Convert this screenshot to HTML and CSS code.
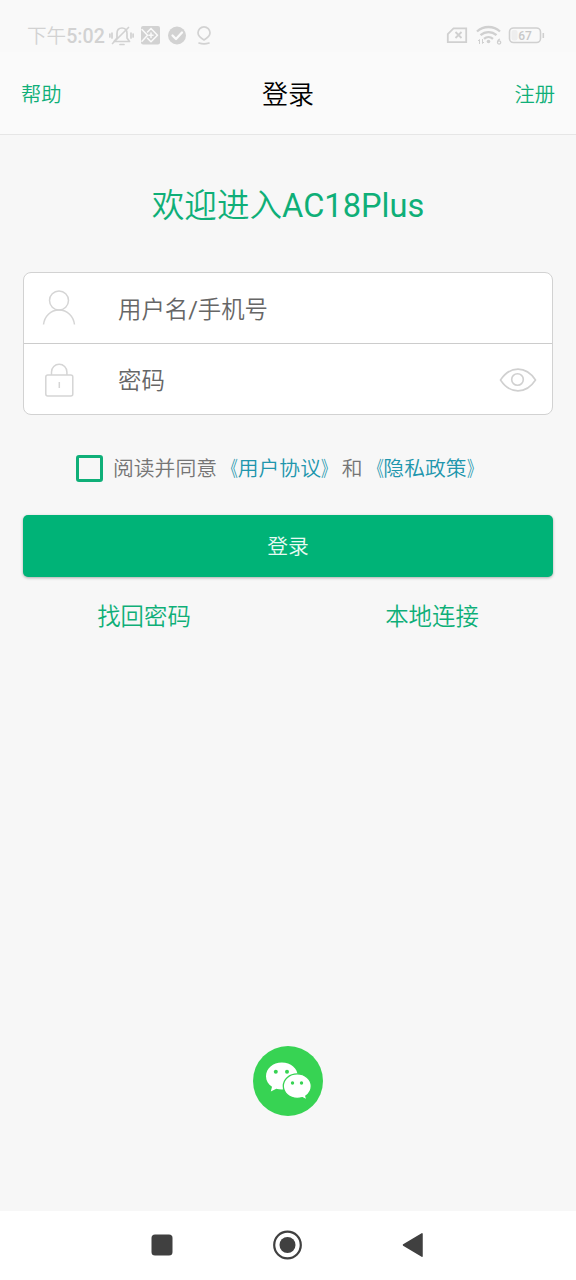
FILE: index.html
```html
<!DOCTYPE html>
<html lang="zh-CN">
<head>
<meta charset="utf-8">
<title>登录</title>
<link rel="stylesheet" href="styles.css">
</head>
<body>
<div class="screen">
  <div class="status">
    <span class="clock">下午<b>5:02</b></span>
    <svg class="status-left" width="106" height="24" viewBox="0 0 106 24" fill="none" stroke="#d2d2d2" stroke-width="1.7" stroke-linecap="round" stroke-linejoin="round">
      <path d="M5 17.500h15.500l-2.500-3.500v-4.500c0-3.500-2-5.500-5-5.500s-5 2-5 5.500v4.500zM11 20.500h4M3.500 19.500l16-16M3 9v5M.9 10v3M22 9v5M24.100 10v3"/>
      <rect x="32" y="2" width="19" height="18.500" rx="2" fill="#d2d2d2" stroke="none"/>
      <path d="M33 5.500l5.500 5.700-5.500 6M42 4.500l6.500 6.700-6.500 6.500-3.500-3.500M42 4.500l-3.500 3.500M42 9v4.500M40 11.200h4" stroke="#fafafa" stroke-width="1.500"/>
      <circle cx="68" cy="11.500" r="9" fill="#d2d2d2" stroke="none"/>
      <path d="M63.500 11.500l3.500 3.500 6-6.500" stroke="#fafafa" stroke-width="2.300"/>
      <path d="M95 16c-3.500-2-6-4-6-7.200a6 6 0 0 1 12 0c0 3.200-2.500 5.200-6 7.200zM90 19c3 1 7 1 10 0"/>
    </svg>
    <svg class="status-right" width="102" height="24" viewBox="0 0 102 24" fill="none" stroke="#d0d0d0" stroke-width="1.800">
      <path d="M2.800 18.200V10l5.700-5.700h12.700v13.900zM10.500 8l6 6m0-6l-6 6"/>
      <path d="M32 7.500c6.500-6 16.500-6 23 0M35.500 11.200c4.700-4.200 11.300-4.200 16 0M39 14.800c2.600-2.300 6.400-2.300 9 0" stroke-width="2.300"/>
      <circle cx="43.500" cy="17.500" r="1.800" fill="#d0d0d0" stroke="none"/>
      <path d="M34.500 20v-4.500l-1.500 1.500M37.500 15v4.500l1.500-1.500" stroke-width="1"/>
      <path d="M55 15c-1.600.500-2.500 2-2.500 3.500a1.600 1.600 0 1 0 .2-.8" stroke-width="1.300"/>
      <rect x="64.500" y="4" width="31" height="14.500" rx="4" stroke-width="1.600"/>
      <path d="M98.300 9v5" stroke-width="1.600"/>
      <rect x="66.500" y="6" width="6" height="10.500" rx="2" fill="#eee" stroke="none"/>
      <text class="battery" x="80" y="15.500" text-anchor="middle">67</text>
    </svg>
  </div>

  <header class="bar">
    <a class="bar-link">帮助</a>
    <h1 class="bar-title">登录</h1>
    <a class="bar-link bar-right">注册</a>
  </header>

  <main class="content">
    <h2 class="welcome">欢迎进入<span class="latin">AC18Plus</span></h2>
    <div class="fields">
      <div class="field">
        <svg width="36" height="40" viewBox="0 0 36 40" fill="none" stroke="#d5d5d5" stroke-width="1.500">
          <circle cx="18" cy="11.500" r="9.500"/>
          <path d="M2.500 35.500c1-8 7-14.500 15.500-14.500S32.500 27.500 33.500 35.500"/>
        </svg>
        <span class="placeholder">用户名<span class="latin">/</span>手机号</span>
      </div>
      <div class="field">
        <svg width="36" height="40" viewBox="0 0 36 40" fill="none" stroke="#d5d5d5" stroke-width="1.500">
          <rect x="4.800" y="15" width="27" height="21" rx="2"/>
          <path d="M10.500 15v-3a7.700 7.700 0 0 1 15.400 0v3M18.300 22v6"/>
        </svg>
        <span class="placeholder">密码</span>
        <svg class="eye" width="38" height="26" viewBox="0 0 38 26" fill="none" stroke="#d0d0d0" stroke-width="1.600">
          <path d="M1.500 13C11-1.500 27-1.500 36.500 13C27 27.500 11 27.500 1.500 13z"/>
          <circle cx="18.500" cy="12.500" r="5.800"/>
        </svg>
      </div>
    </div>
    <div class="terms">
      <span class="check"></span>
      <span class="agree">阅读并同意<a class="policy"><span class="open">《</span>用户协议<span class="close">》</span></a>和<a class="policy"><span class="open">《</span>隐私政策<span class="close">》</span></a></span>
    </div>
    <div class="submit">登录</div>
    <div class="links"><a>找回密码</a><a>本地连接</a></div>
    <svg class="wechat" width="70" height="70" viewBox="0 0 70 70">
      <circle cx="35" cy="35" r="35" fill="#37d353"/>
      <path fill="#fff" d="M28.800 16.500c-8.800 0-15.800 6-15.800 13.700 0 4.400 2.300 8 6 10.600l-1.200 4.700 5.500-2.800c1.800.500 3.600.800 5.500.800 9 0 16-5.900 16-13.300 0-7.700-7-13.700-16-13.700z"/>
      <path fill="#fff" stroke="#37d353" stroke-width="1.300" d="M44.200 27.800c-7.800 0-13.900 5.500-13.900 12.300s6.100 12.300 13.900 12.300c1.900 0 3.600-.300 5.200-.8l4.500 2.500-1.100-4c3.400-2.300 5.500-5.900 5.500-10 0-6.800-6.300-12.300-14.100-12.300z"/>
      <g fill="#37d353"><circle cx="22.800" cy="25.800" r="2"/><circle cx="34" cy="25.800" r="2"/><circle cx="39.500" cy="37" r="1.700"/><circle cx="48.500" cy="37" r="1.700"/></g>
    </svg>
  </main>

  <nav class="nav">
    <svg width="32" height="32" viewBox="0 0 32 32"><rect x="5.500" y="5.500" width="21" height="21" rx="3.500" fill="#404040"/></svg>
    <svg width="32" height="32" viewBox="0 0 32 32"><circle cx="15.500" cy="16" r="13.300" fill="none" stroke="#404040" stroke-width="2.200"/><circle cx="15.500" cy="16" r="8" fill="#404040"/></svg>
    <svg width="32" height="32" viewBox="0 0 32 32"><path d="M6.500 16L25 4.800v22.400z" fill="#404040" stroke="#404040" stroke-width="1.500" stroke-linejoin="round"/></svg>
  </nav>
</div>
</body>
</html>
```
FILE: styles.css
```css
* { box-sizing: border-box; }
body {
  margin: 0;
  background: #f7f7f7;
  font-family: Roboto, "Noto Sans CJK SC", sans-serif;
  font-weight: 350;
  color: #666;
}
.screen { width: 576px; height: 1280px; display: flex; flex-direction: column; }
svg { display: block; flex: none; }
.latin { font-weight: 400; }

.status {
  height: 52px;
  padding: 21px 29px 0 27px;
  display: flex;
  align-items: flex-start;
  background: #f9f9f9;
}
.clock { width: 82px; font-size: 19.6px; line-height: 32px; color: #d2d2d2; white-space: nowrap; }
.clock b { font-weight: 500; }
.status-left { margin-top: 3px; }
.status-right { margin: 3px 0 0 auto; }
.battery { font: 500 12px Roboto, sans-serif; fill: #c8c8c8; stroke: none; }

.bar {
  height: 83px;
  padding: 3px 21px 0;
  display: grid;
  grid-template-columns: 1fr auto 1fr;
  align-items: center;
  background: #fafafa;
  border-bottom: 1px solid #e6e6e6;
}
.bar-link { font-size: 20.3px; line-height: 30px; color: #0faf78; }
.bar-right { text-align: right; }
.bar-title { margin: 0; font-size: 26px; line-height: 36px; font-weight: 350; color: #000; }

.content { flex: 1; padding: 0 23px; display: flex; flex-direction: column; }
.welcome {
  margin: 46px 0 0;
  font-size: 32.6px;
  line-height: 50px;
  font-weight: 350;
  text-align: center;
  color: #0faf78;
}
.fields {
  margin-top: 41px;
  height: 143px;
  display: flex;
  flex-direction: column;
  background: #fff;
  border: 1px solid #d2d2d2;
  border-radius: 8px;
}
.field { flex: 1; display: flex; align-items: center; padding: 1px 15px 0 17px; }
.field + .field { border-top: 1px solid #ccc; }
.placeholder { margin-left: 41px; padding-top: 2px; font-size: 23.400px; line-height: 34px; color: #666; }
.eye { margin-left: auto; }

.terms {
  margin-top: 36px;
  height: 34px;
  padding-left: 53px;
  display: flex;
  align-items: center;
  gap: 10px;
  font-size: 20.8px;
  line-height: 30px;
  color: #757575;
  white-space: nowrap;
}
.agree { padding-top: 2px; }
.check { width: 27px; height: 27px; border: 3px solid #0faf78; border-radius: 3px; }
.policy { color: #2196ad; }
.open, .close { display: inline-block; width: 20.8px; }
.open { transform: scaleX(.7); transform-origin: right; }
.close { transform: scaleX(.7); transform-origin: left; }
.submit {
  margin-top: 30px;
  height: 62px;
  padding-bottom: 2px;
  display: flex;
  align-items: center;
  justify-content: center;
  border-radius: 5px;
  background: #00b377;
  box-shadow: 0 1px 3px rgba(0, 0, 0, .3);
  color: #e9faf3;
  font-size: 20.8px;
}
.links {
  margin: 22px -23px 0;
  display: grid;
  grid-template-columns: 1fr 1fr;
  text-align: center;
  font-size: 23.400px;
  line-height: 36px;
  color: #0faf78;
}
.wechat { margin: auto auto 95px; }

.nav {
  height: 69px;
  padding: 0 147px 1px 146px;
  display: flex;
  align-items: center;
  justify-content: space-between;
  background: #fff;
}
```
